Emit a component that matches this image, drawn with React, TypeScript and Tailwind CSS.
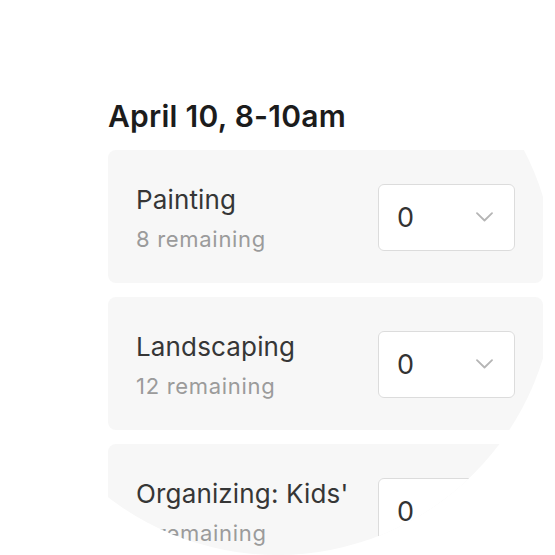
// Liste des créneaux : chaque carte = une activité + sélecteur de quantité.
const slots = [
  { name: 'Painting', left: 8 },
  { name: 'Landscaping', left: 12 },
  { name: "Organizing: Kids'", left: 4 },
]

function QtySelect() {
  return (
    <div className="mt-[34px] flex h-[67px] w-[137px] shrink-0 items-center justify-between rounded-[6px] border border-[#dcdcdc] bg-white pl-[18px] pr-[21px]">
      <span className="text-[27px] leading-none text-[#333]">0</span>
      <svg width="17" height="10" viewBox="0 0 17 10" fill="none" className="mb-[1px]">
        <path d="M1 1.2l7.5 7.3L16 1.2" stroke="#b5b5b5" strokeWidth="1.8" strokeLinecap="round" strokeLinejoin="round" />
      </svg>
    </div>
  )
}

function SlotCard({ name, left }: { name: string; left: number }) {
  return (
    <div className="flex h-[133px] items-start justify-between rounded-[8px] bg-[#f7f7f7] px-7">
      <div className="mt-[34px]">
        <p className="text-[26px] leading-[32px] tracking-[0.15px] text-[#363636]">{name}</p>
        <p className="mt-[5px] text-[22px] leading-[36px] tracking-[0.7px] text-[#9b9b9b]">{left} remaining</p>
      </div>
      <QtySelect />
    </div>
  )
}

export default function App() {
  return (
    <div className="h-[555px] w-[555px] bg-white" style={{ fontFamily: 'Inter, "Noto Sans", sans-serif' }}>
      <div className="h-[555px] w-[555px] overflow-hidden rounded-full bg-white pl-[108px] pt-[98px]">
        <h1 className="mb-4 text-[30px] font-semibold leading-[36px] tracking-[0.25px] text-[#1c1c1c]">April 10, 8-10am</h1>
        <div className="flex w-[435px] flex-col gap-[14px]">
          {slots.map((s) => (
            <SlotCard key={s.name} name={s.name} left={s.left} />
          ))}
        </div>
      </div>
    </div>
  )
}
